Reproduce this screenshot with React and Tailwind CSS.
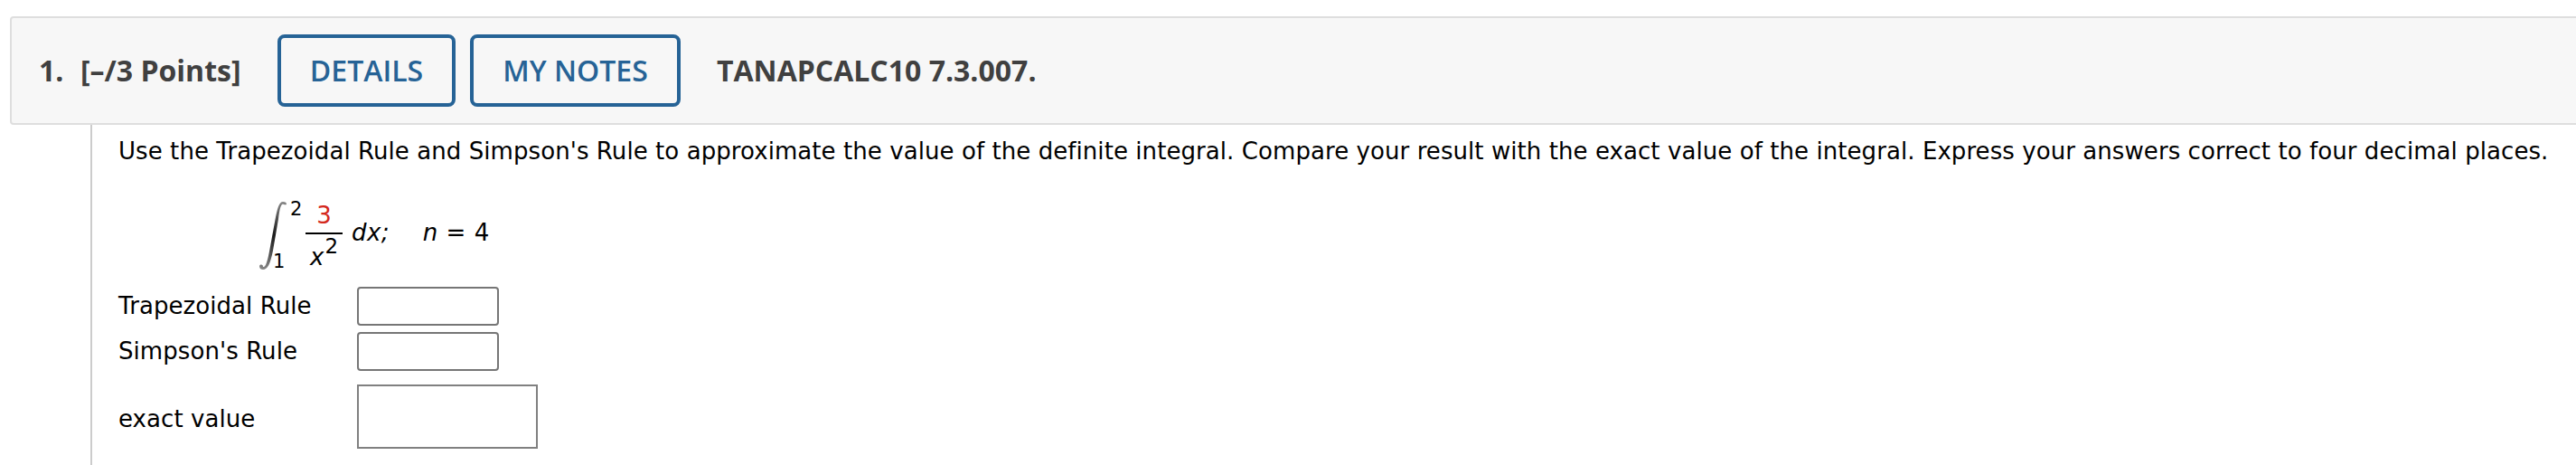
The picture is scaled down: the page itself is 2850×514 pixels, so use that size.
import React from "react";

function HeaderButton({ children, className }) {
  return (
    <button
      className={`h-[80px] shrink-0 whitespace-nowrap rounded-[8px] border-4 border-[#266396] text-center text-[32px] font-semibold leading-[72px] text-[#266396] ${className}`}
    >
      {children}
    </button>
  );
}

function Header() {
  return (
    <header className="ml-[11px] flex h-[120px] w-[2860px] items-center rounded-[4px] border-2 border-[#dedede] bg-[#f7f7f7] pl-[30px] font-['Open_Sans',sans-serif] text-[32px] font-bold text-[#404040]">
      <span className="w-[46px] shrink-0">1.</span>
      <span className="w-[218px] shrink-0 whitespace-nowrap">[–/3 Points]</span>
      <HeaderButton className="w-[197px]">DETAILS</HeaderButton>
      <HeaderButton className="ml-4 w-[233px]">MY NOTES</HeaderButton>
      <span className="ml-10 whitespace-nowrap">TANAPCALC10 7.3.007.</span>
    </header>
  );
}

function Integral() {
  return (
    <div className="ml-[156px] mt-[29px] flex h-[76px] items-start">
      <svg width="30" height="76" viewBox="0 0 30 76" className="shrink-0">
        <defs>
          <linearGradient id="stroke" x1="0" y1="0" x2="0" y2="1">
            <stop offset="0" stopColor="#888" />
            <stop offset="0.3" stopColor="#444" />
            <stop offset="0.5" stopColor="#1a1a1a" />
            <stop offset="0.7" stopColor="#444" />
            <stop offset="1" stopColor="#888" />
          </linearGradient>
        </defs>
        <path
          d="M0 72 C1 70 4 70 4 73 C7 74 9 66 11 56 L18 18 C20 8 22 1 26 1 C29 1 30 2 30 4 C28 5 26 3 25 4 C23 6 22 12 21 20 L15 55 C12 70 9 76 4 76 C2 76 0 75 0 72Z"
          fill="url(#stroke)"
        />
      </svg>
      <div className="-ml-[15px] flex h-[76px] w-[36px] flex-col justify-between text-[21px] leading-[18px]">
        <span className="ml-[19px]">2</span>
        <span>1</span>
      </div>
      <div className="flex w-[41px] flex-col items-center pt-[1px]">
        <span className="h-[34px] leading-[30px] text-[#d4281c]">3</span>
        <span className="h-[2px] w-full bg-black" />
        <span className="flex h-[38px] w-full pl-[5px]">
          <i className="leading-[50px]">x</i>
          <span className="ml-[1px] text-[23px] leading-[27px]">2</span>
        </span>
      </div>
      <i className="ml-[10px] leading-[70px] tracking-[0.4px]">dx;</i>
      <span className="ml-[37px] whitespace-pre leading-[70px] tracking-[0.5px]">
        <i>n</i> = 4
      </span>
    </div>
  );
}

function Row({ label, className, children }) {
  return (
    <div className={`flex ${className}`}>
      <label className="w-[264px] shrink-0 whitespace-nowrap">{label}</label>
      {children}
    </div>
  );
}

export default function App() {
  return (
    <div className="h-[514px] w-full overflow-hidden bg-white pt-[18px]">
      <Header />
      <main className="ml-[100px] h-[376px] border-l-2 border-[#cccccc] pl-[29px] font-['Verdana','DejaVu_Sans',sans-serif] text-[26px] tracking-[0.07px] text-black">
        <p className="h-[55px] whitespace-nowrap leading-[58px]">
          Use the Trapezoidal Rule and Simpson's Rule to approximate the value of the definite integral. Compare your result with the exact value of the integral. Express your answers correct to four decimal places.
        </p>
        <Integral />
        <Row label="Trapezoidal Rule" className="mt-[19px] h-[50px] leading-[43px]">
          <input className="h-[43px] w-[157px] rounded-[4px] border-2 border-[#767676]" />
        </Row>
        <Row label="Simpson's Rule" className="h-[58px] leading-[43px]">
          <input className="h-[43px] w-[157px] rounded-[4px] border-2 border-[#767676]" />
        </Row>
        <Row label="exact value" className="h-[71px] leading-[76px]">
          <div className="h-[71px] w-[200px] border-2 border-[#808080]" />
        </Row>
      </main>
    </div>
  );
}
